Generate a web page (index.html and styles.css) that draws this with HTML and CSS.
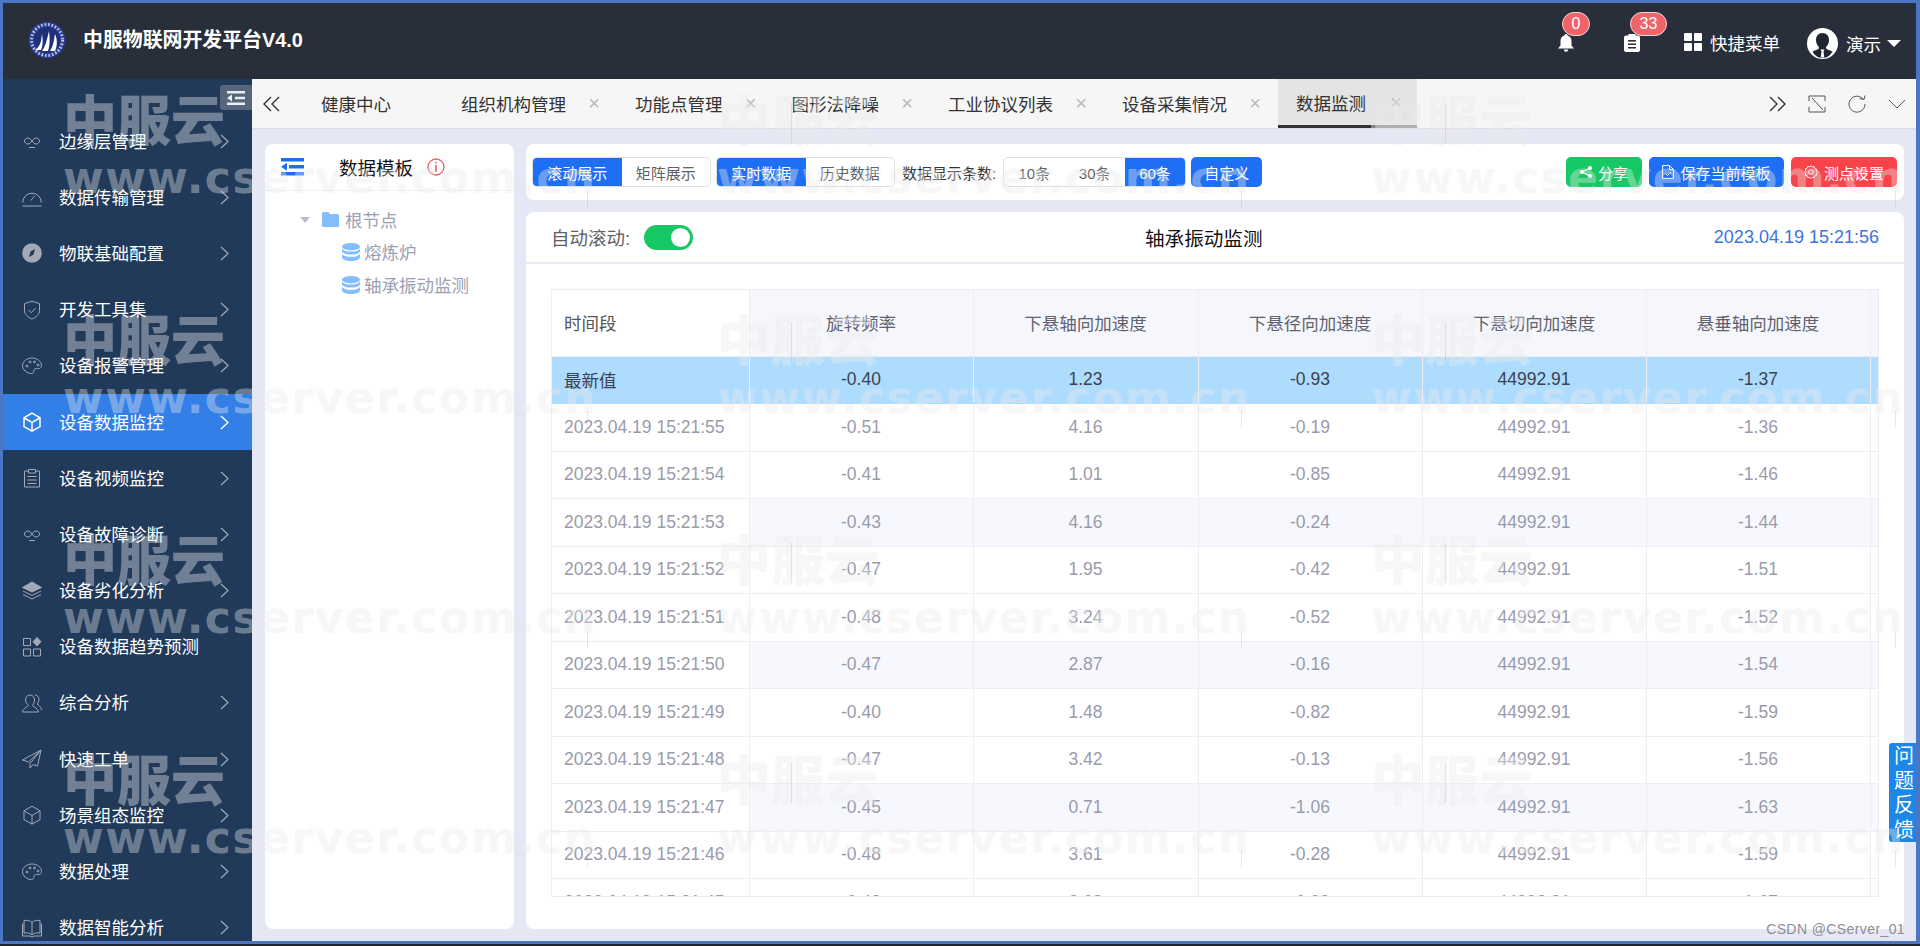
FILE: index.html
```html
<!DOCTYPE html>
<html lang="zh-CN">
<head>
<meta charset="utf-8">
<title>中服物联网开发平台V4.0</title>
<link rel="stylesheet" href="styles.css">
</head>
<body>
<div class="frame">
  <header class="topbar">
    <div class="brand">
      <svg class="logo" viewBox="0 0 38 38"><circle cx="19" cy="19" r="18.5" fill="#2a3a8c"/><circle cx="19" cy="19" r="15.500" fill="none" stroke="#b4bcdc" stroke-width="3" stroke-dasharray="1.800 1.700"/><circle cx="19" cy="19" r="12.800" fill="#1f2f78"/><path d="M7 29c3-2 5-5 6-9l1-7c1 5 1 12-1 16zM14 30c3-4 5-11 7-20 1 7 1 15-1 20zM22 30c3-4 4-11 5-17 2 4 3 11 0 17z" fill="#fff"/></svg>
      <span class="brand-name">中服物联网开发平台V4.0</span>
    </div>
    <div class="top-actions">
      <div class="top-icon bell">
        <svg viewBox="0 0 18 18" width="18" height="18"><path d="M9 0c1 0 1.600.7 1.600 1.500C13 2.200 14.500 4.300 14.500 7v4.500L17 14.500H1L3.500 11.500V7c0-2.700 1.500-4.800 3.900-5.500C7.400.7 8 0 9 0zM6.800 15.500h4.400a2.200 2.200 0 0 1-4.400 0z" fill="#fff"/></svg>
        <span class="badge badge-one">0</span>
      </div>
      <div class="top-icon clip">
        <svg viewBox="0 0 16 18" width="16" height="18"><path d="M2 1.500h2.500V0h7v1.500H14a2 2 0 0 1 2 2V16a2 2 0 0 1-2 2H2a2 2 0 0 1-2-2V3.500a2 2 0 0 1 2-2z" fill="#fff"/><path d="M4 6h8v1.600H4zM4 9.500h8v1.600H4zM4 13h8v1.600H4z" fill="#282f3a"/></svg>
        <span class="badge badge-two">33</span>
      </div>
      <div class="quick">
        <span class="quad"><i></i><i></i><i></i><i></i></span>
        <span>快捷菜单</span>
      </div>
      <div class="user">
        <svg class="avatar" viewBox="0 0 31 31"><circle cx="15.500" cy="15.500" r="15.500" fill="#fff"/><path d="M15.500 5c4 0 6.500 3 6.500 7 0 3-1.300 5.500-3 7l.5 2 6 2.500c-2.500 4.500-6 6.500-10 6.500s-7.500-2-10-6.500l6-2.500.5-2c-1.700-1.500-3-4-3-7 0-4 2.500-7 6.500-7z" fill="#1e2530"/><path d="M13.500 21.500h4l-1 2 .8 6h-3.600l.8-6z" fill="#fff"/></svg>
        <span>演示</span>
        <span class="caret"></span>
      </div>
    </div>
  </header>

  <div class="body">
    <aside class="sidebar">
      <button class="collapse" type="button" aria-label="收起">
        <svg viewBox="0 0 18 16" width="18" height="16"><path d="M0 1h18v2.400H0zM8 6.800h10v2.400H8zM0 12.600h18V15H0zM0 8l5-3.500v7z" fill="#e8edf4"/></svg>
      </button>
      <nav class="menu">
        <a class="item"><svg class="ico" viewBox="0 0 20 20"><path d="M6 7c-2 0-3.500 1.300-3.500 3S4 13 6 13c3 0 5-6 8-6 2 0 3.500 1.300 3.500 3S16 13 14 13c-3 0-5-6-8-6zM7 16.500h6"/></svg><span class="label">边缘层管理</span><svg class="chev" viewBox="0 0 9 15"><path d="M1 1l7 6.500L1 14"/></svg></a>
        <a class="item"><svg class="ico" viewBox="0 0 20 20"><path d="M.7 15.500a9.300 9.300 0 1 1 18.600 0M.5 19h19M8.800 13.500l4-4.800"/></svg><span class="label">数据传输管理</span><svg class="chev" viewBox="0 0 9 15"><path d="M1 1l7 6.500L1 14"/></svg></a>
        <a class="item"><svg class="ico" viewBox="0 0 20 20"><circle cx="10" cy="10" r="9.800" fill="#a3a9b6" stroke="none"/><path d="M13 6l-1.500 5.500L7 14l1.500-5.500z" fill="#213a5a" stroke="none"/></svg><span class="label">物联基础配置</span><svg class="chev" viewBox="0 0 9 15"><path d="M1 1l7 6.500L1 14"/></svg></a>
        <a class="item"><svg class="ico" viewBox="0 0 20 20"><path d="M10 1l7.500 2.800v6.700c0 4-3.500 7-7.500 8.500-4-1.500-7.500-4.500-7.500-8.500V3.800zM6.500 10l2.700 2.700 4.500-4.700"/></svg><span class="label">开发工具集</span><svg class="chev" viewBox="0 0 9 15"><path d="M1 1l7 6.500L1 14"/></svg></a>
        <a class="item"><svg class="ico" viewBox="0 0 20 20"><path d="M10 2c5 0 9.500 3.300 9.500 7.500 0 3-3 3.500-5 3-1.500-.3-2.500.5-2.500 2 0 1.500-.5 3-2.500 3C5 17.500.500 14 .500 9.500.500 5.300 5 2 10 2z"/><circle cx="5" cy="10" r="1"/><circle cx="8" cy="6" r="1"/><circle cx="12.500" cy="6" r="1"/><circle cx="16" cy="9" r="1"/></svg><span class="label">设备报警管理</span><svg class="chev" viewBox="0 0 9 15"><path d="M1 1l7 6.500L1 14"/></svg></a>
        <a class="item active"><svg class="ico" viewBox="0 0 20 20"><path d="M10 1.200l8 4.600v8.800l-8 4.600-8-4.600V5.800zM2.300 6L10 10.500 17.700 6M10 10.500V19"/></svg><span class="label">设备数据监控</span><svg class="chev" viewBox="0 0 9 15"><path d="M1 1l7 6.500L1 14"/></svg></a>
        <a class="item"><svg class="ico" viewBox="0 0 20 20"><path d="M6.500 3H2.500v16h15V3h-4M6.500 1.500h7v3.500h-7zM5.500 8.500h9M5.500 12h9M5.500 15.500h9"/></svg><span class="label">设备视频监控</span><svg class="chev" viewBox="0 0 9 15"><path d="M1 1l7 6.500L1 14"/></svg></a>
        <a class="item"><svg class="ico" viewBox="0 0 20 20"><path d="M6 7c-2 0-3.500 1.300-3.500 3S4 13 6 13c3 0 5-6 8-6 2 0 3.500 1.300 3.500 3S16 13 14 13c-3 0-5-6-8-6zM7 16.500h6"/></svg><span class="label">设备故障诊断</span><svg class="chev" viewBox="0 0 9 15"><path d="M1 1l7 6.500L1 14"/></svg></a>
        <a class="item"><svg class="ico" viewBox="0 0 20 20"><path d="M10 1l9.500 5.500L10 11 .500 6.500z" fill="#a3a9b6"/><path d="M1 10l9 4.500 9-4.500M1 13.500l9 4.500 9-4.500"/></svg><span class="label">设备劣化分析</span><svg class="chev" viewBox="0 0 9 15"><path d="M1 1l7 6.500L1 14"/></svg></a>
        <a class="item"><svg class="ico" viewBox="0 0 20 20"><path d="M1.500 1.500h7v7h-7zM1.500 12h7v7h-7zM11.500 12h7v7h-7z"/><path d="M15 .500l4 4.200-4 4.200-4-4.200z" fill="#a3a9b6"/></svg><span class="label">设备数据趋势预测</span></a>
        <a class="item"><svg class="ico" viewBox="0 0 20 20"><path d="M8 2c3 0 4.500 2.500 4.500 5S11 12 10.500 12.500c0 1 5 2 6 6.500H.500c1-4.500 6-5.500 6-6.500C6 12 3.500 9.500 3.500 7S5 2 8 2zM13 2c2.500 0 4 2 4 4.500 0 2-1 3.500-2 4.500 1 1 4 2 4.500 6"/></svg><span class="label">综合分析</span><svg class="chev" viewBox="0 0 9 15"><path d="M1 1l7 6.500L1 14"/></svg></a>
        <a class="item"><svg class="ico" viewBox="0 0 20 20"><path d="M19 1L.500 11l6 2L19 1 8 14.500V19l3-3.500 4.500 1.500z"/></svg><span class="label">快速工单</span><svg class="chev" viewBox="0 0 9 15"><path d="M1 1l7 6.500L1 14"/></svg></a>
        <a class="item"><svg class="ico" viewBox="0 0 20 20"><path d="M10 1.200l8 4.600v8.800l-8 4.600-8-4.600V5.800zM2.300 6L10 10.500 17.700 6M10 10.500V19"/></svg><span class="label">场景组态监控</span><svg class="chev" viewBox="0 0 9 15"><path d="M1 1l7 6.500L1 14"/></svg></a>
        <a class="item"><svg class="ico" viewBox="0 0 20 20"><path d="M10 2c5 0 9.500 3.300 9.500 7.500 0 3-3 3.500-5 3-1.500-.3-2.500.5-2.500 2 0 1.500-.5 3-2.500 3C5 17.500.500 14 .500 9.500.500 5.300 5 2 10 2z"/><circle cx="5" cy="10" r="1"/><circle cx="8" cy="6" r="1"/><circle cx="12.500" cy="6" r="1"/><circle cx="16" cy="9" r="1"/></svg><span class="label">数据处理</span><svg class="chev" viewBox="0 0 9 15"><path d="M1 1l7 6.500L1 14"/></svg></a>
        <a class="item"><svg class="ico" viewBox="0 0 20 20"><path d="M10 4.500C8 2.500 5 2 2 2.500V15c3-.5 6 0 8 2 2-2 5-2.500 8-2V2.500c-3-.5-6 0-8 2zM10 4.500V17M.500 5.500V18h7l2.500 1 2.500-1h7V5.500"/></svg><span class="label">数据智能分析</span><svg class="chev" viewBox="0 0 9 15"><path d="M1 1l7 6.500L1 14"/></svg></a>
      </nav>
    </aside>

    <main class="content">
      <div class="tabs">
        <span class="tab-tool first"><svg viewBox="0 0 17 16" width="17" height="16"><path d="M8 1L1 8l7 7M16 1L9 8l7 7"/></svg></span>
        <div class="tab-list">
          <span class="tab home">健康中心</span>
          <span class="tab">组织机构管理<i class="x">×</i></span>
          <span class="tab">功能点管理<i class="x">×</i></span>
          <span class="tab">图形法降噪<i class="x">×</i></span>
          <span class="tab">工业协议列表<i class="x">×</i></span>
          <span class="tab">设备采集情况<i class="x">×</i></span>
          <span class="tab current">数据监测<i class="x">×</i></span>
        </div>
        <div class="tab-tools">
          <svg viewBox="0 0 17 16" width="17" height="16"><path d="M1 1l7 7-7 7M9 1l7 7-7 7"/></svg>
          <svg viewBox="0 0 18 18" width="18" height="18" class="thin"><path d="M1 6V1h16v5M1 12v5h16v-5M4 3l11 12"/></svg>
          <svg viewBox="0 0 18 18" width="18" height="18" class="thin"><path d="M15.500 4.500A8 8 0 1 0 17 9M11.500 3.500l4.500 1L17 .500"/></svg>
          <svg viewBox="0 0 18 10" width="18" height="10" class="thin"><path d="M1 1l8 8 8-8"/></svg>
        </div>
      </div>

      <div class="work">
        <section class="tree-panel">
          <div class="tree-head">
            <svg class="tree-menu" viewBox="0 0 23 18"><path d="M0 0h23v3.500H0zM8 7h15v3.500H8zM0 14h23v3.500H0zM0 8.700l6-4v8z" fill="#1f6cf0"/></svg>
            <span class="tree-title">数据模板</span>
            <svg class="info" viewBox="0 0 18 18"><circle cx="9" cy="9" r="8" fill="none" stroke="#e8606a" stroke-width="1.300"/><path d="M8.200 3.800h1.600v1.800H8.200zM8.200 7h1.600v7H8.200z" fill="#e8606a"/></svg>
          </div>
          <ul class="tree">
            <li class="node root"><span class="tree-caret"></span><svg viewBox="0 0 17 15" width="17" height="15"><path d="M0 1.500A1.500 1.500 0 0 1 1.500 0h5l1.500 2h7.500A1.500 1.500 0 0 1 17 3.500V13.500A1.500 1.500 0 0 1 15.500 15H1.500A1.500 1.500 0 0 1 0 13.500z" fill="#84bdfb"/></svg><span>根节点</span></li>
            <li class="node leaf"><svg class="db" viewBox="0 0 18 18"><ellipse cx="9" cy="3.700" rx="9" ry="3.700" fill="#84bdfb"/><path d="M0 5.800c1.500 2 5 2.800 9 2.800s7.500-.8 9-2.800v3c-1.500 2-5 2.800-9 2.800s-7.500-.8-9-2.800zM0 11c1.500 2 5 2.800 9 2.800s7.500-.8 9-2.800v3.300C18 16.500 14 18 9 18s-9-1.500-9-3.700z" fill="#84bdfb"/></svg><span>熔炼炉</span></li>
            <li class="node leaf"><svg class="db" viewBox="0 0 18 18"><ellipse cx="9" cy="3.700" rx="9" ry="3.700" fill="#84bdfb"/><path d="M0 5.800c1.500 2 5 2.800 9 2.800s7.500-.8 9-2.800v3c-1.500 2-5 2.800-9 2.800s-7.500-.8-9-2.800zM0 11c1.500 2 5 2.800 9 2.800s7.500-.8 9-2.800v3.300C18 16.500 14 18 9 18s-9-1.500-9-3.700z" fill="#84bdfb"/></svg><span>轴承振动监测</span></li>
          </ul>
        </section>

        <div class="data-col">
          <div class="toolbar">
            <div class="seg seg-a"><span class="on">滚动展示</span><span>矩阵展示</span></div>
            <div class="seg seg-b"><span class="on">实时数据</span><span>历史数据</span></div>
            <span class="count-label">数据显示条数:</span>
            <div class="seg seg-c"><span>10条</span><span>30条</span><span class="on">60条</span></div>
            <span class="btn custom">自定义</span>
            <div class="tool-right">
              <span class="btn share"><svg viewBox="0 0 12 12" width="12" height="12"><circle cx="10" cy="2" r="2" fill="#fff"/><circle cx="10" cy="10" r="2" fill="#fff"/><circle cx="2" cy="6" r="2" fill="#fff"/><path d="M10 2L2 6l8 4" fill="none" stroke="#fff" stroke-width="1.200"/></svg>分享</span>
              <span class="btn save"><svg viewBox="0 0 12 14" width="12" height="14"><path d="M.6.6h7l3.800 3.800v9H.6zM7.500.6v4h4M3.500 8.500l2 2 3.500-3.500" fill="none" stroke="#fff" stroke-width="1"/></svg>保存当前模板</span>
              <span class="btn gear"><svg viewBox="0 0 14 14" width="14" height="14"><path d="M7 .7l1.300 1.400 1.900-.4.600 1.800 1.800.6-.4 1.900L13.500 7l-1.300 1.300.4 1.900-1.800.6-.6 1.800-1.900-.4L7 13.500l-1.300-1.300-1.900.4-.6-1.800-1.800-.6.4-1.900L.5 7l1.300-1.300-.4-1.900 1.800-.6.6-1.800 1.900.4z" fill="none" stroke="#fff"/><circle cx="7" cy="7" r="2.300" fill="none" stroke="#fff"/></svg>测点设置</span>
            </div>
          </div>

          <section class="monitor">
            <div class="monitor-head">
              <div class="auto"><span>自动滚动:</span><span class="switch"><i></i></span></div>
              <div class="monitor-title">轴承振动监测</div>
              <div class="stamp">2023.04.19 15:21:56</div>
            </div>
            <div class="table-wrap">
              <table class="grid">
                <colgroup><col class="c1"><col class="c2"><col class="c3"><col class="c4"><col class="c5"><col class="c6"><col class="c7"></colgroup>
                <thead>
                  <tr><th>时间段</th><th>旋转频率</th><th>下悬轴向加速度</th><th>下悬径向加速度</th><th>下悬切向加速度</th><th>悬垂轴向加速度</th><th></th></tr>
                </thead>
                <tbody>
                  <tr class="latest"><td>最新值</td><td>-0.40</td><td>1.23</td><td>-0.93</td><td>44992.91</td><td>-1.37</td><td></td></tr>
                  <tr><td>2023.04.19 15:21:55</td><td>-0.51</td><td>4.16</td><td>-0.19</td><td>44992.91</td><td>-1.36</td><td></td></tr>
                  <tr><td>2023.04.19 15:21:54</td><td>-0.41</td><td>1.01</td><td>-0.85</td><td>44992.91</td><td>-1.46</td><td></td></tr>
                  <tr class="stripe"><td>2023.04.19 15:21:53</td><td>-0.43</td><td>4.16</td><td>-0.24</td><td>44992.91</td><td>-1.44</td><td></td></tr>
                  <tr><td>2023.04.19 15:21:52</td><td>-0.47</td><td>1.95</td><td>-0.42</td><td>44992.91</td><td>-1.51</td><td></td></tr>
                  <tr><td>2023.04.19 15:21:51</td><td>-0.48</td><td>3.24</td><td>-0.52</td><td>44992.91</td><td>-1.52</td><td></td></tr>
                  <tr class="stripe"><td>2023.04.19 15:21:50</td><td>-0.47</td><td>2.87</td><td>-0.16</td><td>44992.91</td><td>-1.54</td><td></td></tr>
                  <tr><td>2023.04.19 15:21:49</td><td>-0.40</td><td>1.48</td><td>-0.82</td><td>44992.91</td><td>-1.59</td><td></td></tr>
                  <tr><td>2023.04.19 15:21:48</td><td>-0.47</td><td>3.42</td><td>-0.13</td><td>44992.91</td><td>-1.56</td><td></td></tr>
                  <tr class="stripe"><td>2023.04.19 15:21:47</td><td>-0.45</td><td>0.71</td><td>-1.06</td><td>44992.91</td><td>-1.63</td><td></td></tr>
                  <tr><td>2023.04.19 15:21:46</td><td>-0.48</td><td>3.61</td><td>-0.28</td><td>44992.91</td><td>-1.59</td><td></td></tr>
                  <tr><td>2023.04.19 15:21:45</td><td>-0.48</td><td>2.68</td><td>-0.99</td><td>44992.91</td><td>-1.67</td><td></td></tr>
                </tbody>
              </table>
            </div>
          </section>
        </div>
      </div>
    </main>
  </div>

  <div class="feedback">问题反馈</div>
  <div class="credit">CSDN @CServer_01</div>

  <div class="watermarks" aria-hidden="true">
    <div class="wm"><b>中服云</b><span>www.cserver.com.cn</span></div>
    <div class="wm"><b>中服云</b><span>www.cserver.com.cn</span></div>
    <div class="wm"><b>中服云</b><span>www.cserver.com.cn</span></div>
    <div class="wm"><b>中服云</b><span>www.cserver.com.cn</span></div>
    <div class="wm"><b>中服云</b><span>www.cserver.com.cn</span></div>
    <div class="wm"><b>中服云</b><span>www.cserver.com.cn</span></div>
    <div class="wm"><b>中服云</b><span>www.cserver.com.cn</span></div>
    <div class="wm"><b>中服云</b><span>www.cserver.com.cn</span></div>
    <div class="wm"><b>中服云</b><span>www.cserver.com.cn</span></div>
    <div class="wm"><b>中服云</b><span>www.cserver.com.cn</span></div>
    <div class="wm"><b>中服云</b><span>www.cserver.com.cn</span></div>
    <div class="wm"><b>中服云</b><span>www.cserver.com.cn</span></div>
  </div>
</div>
</body>
</html>
```

FILE: styles.css
```css
* { box-sizing: border-box; }
html, body { margin: 0; height: 100%; overflow: hidden; }
body {
  font-family: "Liberation Sans", "Noto Sans CJK SC", sans-serif;
  font-size: 17.500px;
  background: #1c2530;
}
.frame {
  position: relative;
  width: 1920px;
  height: 944px;
  overflow: hidden;
  display: flex;
  flex-direction: column;
  border-style: solid;
  border-color: #4a76c4;
  border-width: 3px 4px 3px 3px;
}

/* top bar */
.topbar {
  flex: 0 0 76px;
  background: #282f3a;
  display: flex;
  align-items: center;
  justify-content: space-between;
  color: #fff;
}
.brand { display: flex; align-items: center; padding-left: 25px; margin-top: -3px; }
.logo { width: 38px; height: 38px; }
.brand-name { margin-left: 17px; font-size: 19.900px; font-weight: 700; margin-top: -3px; }
.top-actions { display: flex; align-items: center; height: 100%; padding-right: 15px; }
.top-icon { position: relative; display: flex; margin-top: 3px; }
.top-icon svg { display: block; }
.bell { margin-right: 49px; }
.clip { margin-right: 44px; }
.badge {
  position: absolute;
  top: -22px;
  height: 24px;
  border-radius: 12px;
  background: #ef6468;
  border: 1px solid #f7d7d8;
  color: #fff;
  font-size: 16px;
  line-height: 22px;
  text-align: center;
}
.badge-one { left: 5px; width: 28px; }
.badge-two { left: 6px; width: 37px; }
.quick { display: flex; align-items: center; gap: 8px; margin-right: 27px; margin-top: 2px; }
.quad { display: grid; grid-template-columns: 8px 8px; grid-template-rows: 8px 8px; gap: 2px; }
.quad i { background: #fff; border-radius: 1px; }
.user { display: flex; align-items: center; margin-top: 4px; }
.avatar { width: 31px; height: 31px; margin-right: 8px; }
.caret { margin-left: 6px; width: 0; height: 0; border: 7px solid transparent; border-top: 7px solid #fff; border-bottom: 0; }

/* layout */
.body { flex: 1; display: flex; min-height: 0; background: #e6e7f5; }

/* sidebar */
.sidebar { position: relative; flex: 0 0 249px; background: #213a5a; overflow: hidden; }
.collapse {
  position: absolute;
  top: 6px;
  right: 0;
  width: 32px;
  height: 25px;
  padding: 0;
  border: 0;
  border-radius: 3px 0 0 3px;
  background: #56667c;
  display: flex;
  align-items: center;
  justify-content: center;
}
.menu { padding-top: 34px; }
.item {
  display: flex;
  align-items: center;
  height: 56.200px;
  padding-left: 19px;
  color: #fff;
}
.ico { width: 20px; height: 20px; fill: none; stroke: #a3a9b6; stroke-width: 1; flex: none; }
.label { margin-left: 17px; flex: 1; white-space: nowrap; padding-bottom: 2px; }
.chev { width: 9px; height: 15px; margin-right: 23px; fill: none; stroke: #a3a9b6; stroke-width: 1.200; flex: none; }
.item.active { background: #327fe7; }
.item.active .ico, .item.active .chev { stroke: #fff; stroke-width: 1.500; }

/* tabs */
.content { flex: 1; min-width: 0; display: flex; flex-direction: column; }
.tabs {
  flex: 0 0 50px;
  background: #f6f6f6;
  border-bottom: 1px solid #dcdde3;
  display: flex;
  align-items: stretch;
  color: #333;
}
.tabs svg { fill: none; stroke: #333; stroke-width: 1.400; }
.tabs svg.thin { stroke: #555; stroke-width: 1; }
.tab-tool.first { display: flex; align-items: center; padding-left: 11px; width: 69px; flex: none; }
.tab-list { display: flex; flex: 1; min-width: 0; }
.tab { display: flex; align-items: center; white-space: nowrap; }
.tab.home { width: 140px; }
.x { font-style: normal; font-family: "Liberation Sans", sans-serif; color: #b9b9c0; font-size: 20px; width: 12px; margin: 0 35px 0 22px; text-align: center; font-weight: 300; }
.tab.current {
  background: #e4e4e4;
  padding-left: 18px;
  margin-left: -18px;
  border-bottom: 3px solid;
  border-image: linear-gradient(90deg, #333 0 67%, #888 67% 100%) 1;
}
.tab.current .x { margin: 0 15px 0 24px; }
.tab-tools { display: flex; align-items: center; gap: 22px; padding-right: 10px; flex: none; }

/* work area */
.work { flex: 1; min-height: 0; display: flex; padding: 15px 12px 12px 13px; }
.tree-panel { flex: 0 0 249px; background: #fff; border-radius: 8px; margin-right: 12px; }
.tree-head { height: 47px; display: flex; align-items: center; padding-left: 16px; border-bottom: 1px solid #f0f1f6; }
.tree-menu { width: 23px; height: 18px; }
.tree-title { margin-left: 35px; font-size: 18.500px; color: #111; }
.info { width: 18px; height: 18px; margin-left: 14px; }
.tree { list-style: none; margin: 0; padding: 13px 0 0; color: #9b9fb3; }
.node { display: flex; align-items: center; height: 33px; white-space: nowrap; }
.root { height: 31px; padding-left: 35px; gap: 6px; }
.tree-caret { width: 0; height: 0; border: 5px solid transparent; border-top: 6px solid #b9bcc9; border-bottom: 0; margin-right: 6px; }
.leaf { padding-left: 77px; gap: 4px; }
.db { width: 18px; height: 18px; }
.data-col { flex: 1; min-width: 0; display: flex; flex-direction: column; gap: 12px; }

/* toolbar */
.toolbar { flex: 0 0 56px; background: #fff; border-radius: 8px; display: flex; align-items: center; padding: 0 7px 0 6px; font-size: 15px; }
.seg { display: flex; height: 30px; border-radius: 5px; border: 1px solid #dcdfe6; overflow: hidden; color: #606266; }
.seg span { flex: 1; display: flex; align-items: center; justify-content: center; }
.seg .on { background: #1f6ff5; color: #fff; }
.seg-a, .seg-b { width: 179px; }
.seg-a { margin-right: 5px; }
.seg-c { width: 183px; }
.count-label { margin: 0 7px; color: #333; white-space: nowrap; }
.btn { display: inline-flex; align-items: center; justify-content: center; height: 30px; border-radius: 5px; color: #fff; gap: 6px; white-space: nowrap; }
.custom { width: 71px; margin-left: 5px; background: #1f6ff5; }
.tool-right { margin-left: auto; display: flex; gap: 7px; }
.share { width: 76px; background: #17c964; }
.save { width: 135px; background: #1f6ff5; }
.gear { width: 106px; background: #f9434a; }

/* monitor */
.monitor { flex: 1; min-height: 0; background: #fff; border-radius: 8px; display: flex; flex-direction: column; overflow: hidden; }
.monitor-head { flex: 0 0 52px; display: flex; align-items: center; padding: 0 25px; border-bottom: 2px solid #eaebf2; }
.auto { display: flex; align-items: center; gap: 14px; color: #606266; font-size: 18.500px; width: 594px; }
.switch { width: 49px; height: 25px; border-radius: 13px; background: #17c964; position: relative; display: block; }
.switch i { position: absolute; right: 3px; top: 3px; width: 19px; height: 19px; border-radius: 50%; background: #fff; }
.monitor-title { color: #111; font-size: 19.600px; }
.stamp { margin-left: auto; color: #3b74e0; font-size: 18px; }
.table-wrap { margin: 25px 25px 0 25px; height: 608px; overflow: hidden; border: 1px solid #ecedf3; }
.grid { width: 1326px; border-collapse: collapse; table-layout: fixed; color: #999bad; font-size: 17.500px; }
.c1 { width: 197px; }
.c2 { width: 224px; }
.c3 { width: 225px; }
.c4 { width: 224px; }
.c5 { width: 224px; }
.c6 { width: 224px; }
.c7 { width: 8px; }
.grid th, .grid td { border-right: 1px solid #eceef4; border-bottom: 1px solid #eceef4; text-align: center; padding: 0; overflow: hidden; }
.grid th { height: 66px; background: #f6f7fd; font-weight: 400; color: #606270; }
.grid td { height: 47.500px; }
.grid th:first-child, .grid td:first-child { text-align: left; padding-left: 12px; background: #fff; }
.grid th:first-child { color: #555; }
.grid .stripe td { background: #f7f8fd; }
.grid .stripe td:first-child { background: #fff; }
.grid tr.latest td { background: #aedcff; color: #3c4250; border-bottom-color: #aedcff; }

/* floats */
.feedback {
  position: absolute;
  right: -3px;
  top: 740px;
  width: 30px;
  height: 99px;
  background: #1c87e6;
  border-radius: 3px;
  color: #fff;
  font-size: 20px;
  line-height: 24.500px;
  text-align: center;
  padding: 1px 5px;
}
.credit {
  position: absolute;
  right: 11px;
  top: 918px;
  font-size: 14px;
  color: #8d8d93;
  letter-spacing: .4px;
}

/* watermark overlay */
.watermarks {
  position: absolute;
  left: 60px;
  top: 85px;
  display: grid;
  grid-template-columns: repeat(3, 654px);
  grid-auto-rows: 220px;
  pointer-events: none;
}
.wm { position: relative; color: rgba(235, 235, 235, .4); white-space: nowrap; font-family: "DejaVu Sans", "Noto Sans CJK SC", sans-serif; font-weight: 700; }
.wm b { display: block; font-family: "Noto Sans CJK SC", sans-serif; font-weight: 900; font-size: 54px; line-height: 60px; }
.wm span { display: block; font-size: 44px; line-height: 48px; letter-spacing: 1.500px; margin-top: 6px; }
.wm::before, .wm::after { content: ""; position: absolute; width: 1px; background: rgba(120, 120, 130, .16); }
.wm::before { left: 74px; top: 15px; height: 40px; }
.wm::after { left: 524px; top: 103px; height: 17px; }
```
